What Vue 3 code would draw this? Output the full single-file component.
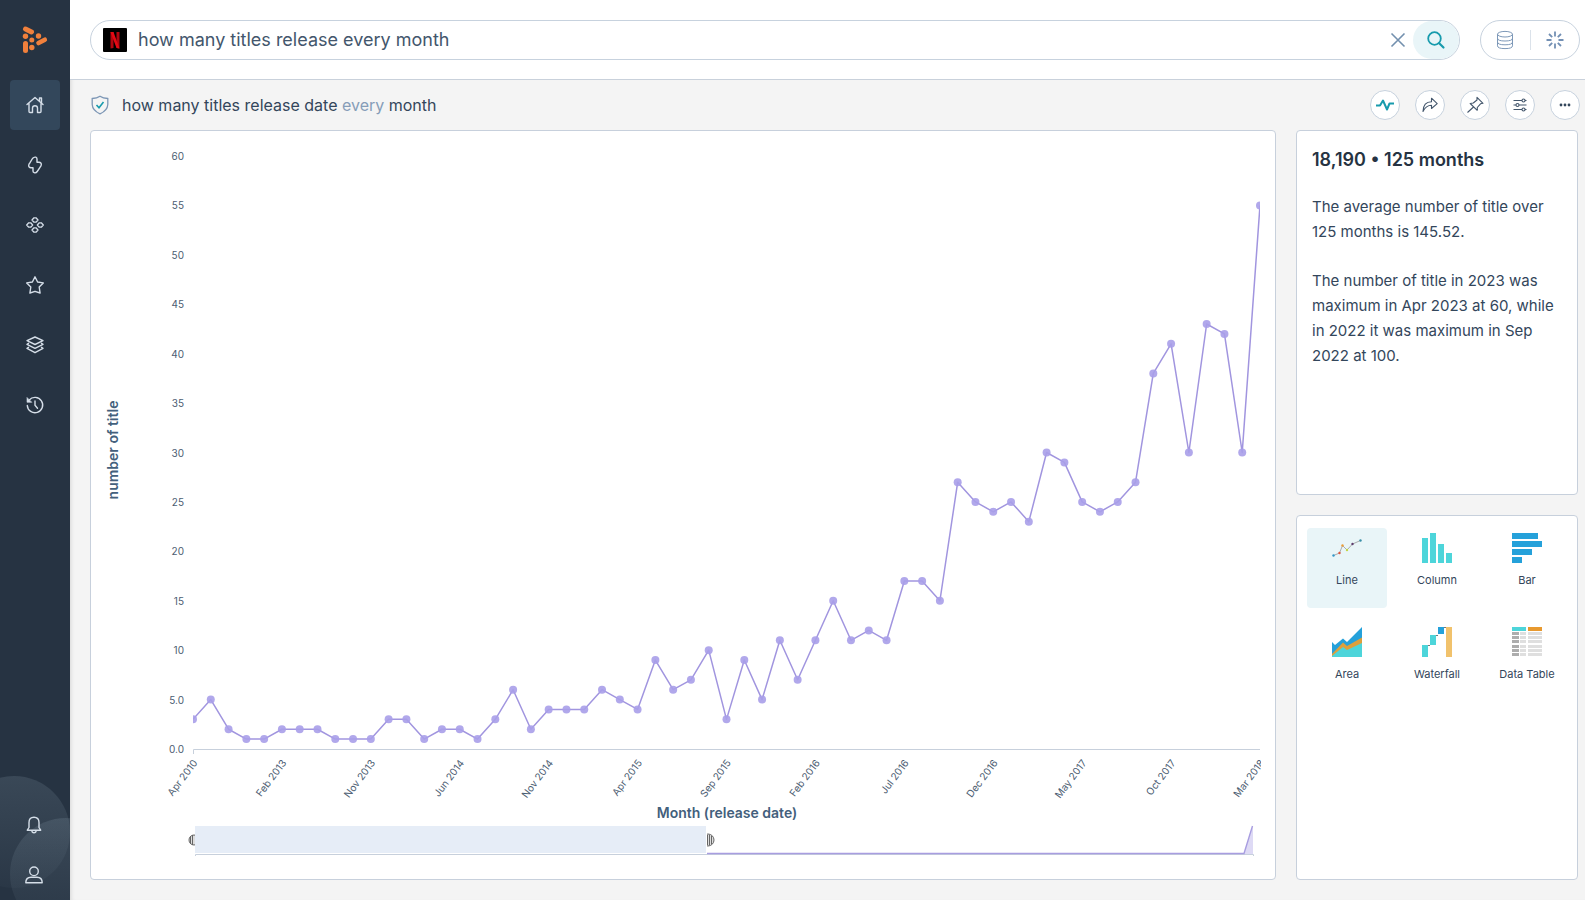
<script setup>
import { ref } from 'vue'

const query = ref('how many titles release every month')
const activeChart = ref('Line')

const values = [
  3, 5, 2, 1, 1, 2, 2, 2, 1, 1, 1, 3, 3, 1, 2, 2, 1, 3, 6, 2, 4, 4, 4, 6, 5, 4, 9, 6, 7, 10,
  3, 9, 5, 11, 7, 11, 15, 11, 12, 11, 17, 17, 15, 27, 25, 24, 25, 23, 30, 29, 25, 24, 25, 27,
  38, 41, 30, 43, 42, 30, 55
]
const months = [
  'Apr 2010', 'Feb 2013', 'Nov 2013', 'Jun 2014', 'Nov 2014', 'Apr 2015', 'Sep 2015',
  'Feb 2016', 'Jul 2016', 'Dec 2016', 'May 2017', 'Oct 2017', 'Mar 2018'
]

const plot = { left: 102, right: 1169, top: 25, bottom: 618 }
const xAt = (i) => plot.left + ((plot.right - plot.left) * i) / (values.length - 1)
const yAt = (v) => plot.bottom - ((plot.bottom - plot.top) * v) / 60

const points = values.map((v, i) => ({ x: xAt(i), y: yAt(v) }))
const linePath = points.map((p) => `${p.x},${p.y}`).join(' ')
const yTicks = Array.from({ length: 13 }, (_, i) => {
  const v = i * 5
  return { y: yAt(v), label: v < 10 ? v.toFixed(1) : String(v) }
})
const xTicks = months.map((label, i) => ({ x: xAt(i * 5), label }))

const chartTypes = ['Line', 'Column', 'Bar', 'Area', 'Waterfall', 'Data Table']
const tableRows = [5, 9, 13, 18, 22, 26]
</script>

<template>
  <div class="app">
    <aside class="sidebar">
      <svg class="glow" viewBox="0 0 70 124" aria-hidden="true">
        <defs>
          <linearGradient id="fade" x1="0" y1="0" x2="0" y2="1">
            <stop offset="0" stop-color="#a9bfce" stop-opacity=".15" />
            <stop offset="1" stop-color="#a9bfce" stop-opacity=".03" />
          </linearGradient>
        </defs>
        <circle cx="14" cy="56" r="56" fill="url(#fade)" />
        <circle cx="66" cy="98" r="56" fill="url(#fade)" />
      </svg>

      <a href="#" class="logo" aria-label="Home page">
        <svg width="26" height="28" viewBox="0 0 26 28" stroke="#f0803c" stroke-linecap="round" fill="#f0803c">
          <path d="M3.500 3L9.500 6" stroke-width="5" />
          <path d="M3.500 17.500V24.500" stroke-width="5" />
          <path d="M16.500 17L22.800 13.700" stroke-width="4.600" />
          <g stroke="none">
            <circle cx="3.500" cy="10.300" r="2.700" />
            <circle cx="9.800" cy="14" r="2.500" />
            <circle cx="16.500" cy="10" r="2.700" />
            <circle cx="9.800" cy="21.500" r="2.700" />
          </g>
        </svg>
      </a>

      <nav class="nav">
        <a href="#" class="nav-item active" aria-label="Home">
          <svg viewBox="0 0 20 20"><path d="M2 9.500L10 2.500L18 9.500M14.500 6V3H16.500V8M4 8.500V16.500Q4 17.500 5 17.500H7.500V13Q7.500 10.800 10 10.800T12.500 13V17.500H15Q16 17.500 16 16.500V8.500" /></svg>
        </a>
        <a href="#" class="nav-item" aria-label="Insights">
          <svg viewBox="0 0 20 20"><path d="M7.500 3.500Q9 1.700 10.800 2.200Q12 2.600 12 4V7.300H14Q16.500 7.500 16.300 9.800Q16.200 11 15 12.300L12.200 16.500Q11 18.300 9.200 17.700Q8 17.300 8 16V12.700H6Q3.500 12.500 3.700 10.200Q3.800 9 5 7.700Z" /></svg>
        </a>
        <a href="#" class="nav-item" aria-label="Pinboards">
          <svg viewBox="0 0 20 20">
            <g stroke-width="1.300">
              <path d="M9 2.800H11L13 5L11 7.200H9L7 5Z" />
              <path d="M3.700 7.800H5.700L7.700 10L5.700 12.200H3.700L1.700 10Z" />
              <path d="M14.300 7.800H16.300L18.300 10L16.300 12.200H14.300L12.300 10Z" />
              <path d="M9 12.800H11L13 15L11 17.200H9L7 15Z" />
            </g>
          </svg>
        </a>
        <a href="#" class="nav-item" aria-label="Favourites">
          <svg viewBox="0 0 20 20"><path d="M10 1.800L12.600 7L18.300 7.900L14.200 12L15.100 18L10 16.300L4.900 18L5.800 12L1.700 7.900L7.400 7Z" /></svg>
        </a>
        <a href="#" class="nav-item" aria-label="Data sets">
          <svg viewBox="0 0 20 20"><path d="M10 2L18 5.700L10 9.500L2 5.700ZM3.500 8.300L2 9.300L10 13.300L18 9.300L16.500 8.300M3.500 12.300L2 13.300L10 17.700L18 13.300L16.500 12.300" /></svg>
        </a>
        <a href="#" class="nav-item" aria-label="History">
          <svg viewBox="0 0 20 20"><path d="M4.200 5A7.700 7.700 0 1 1 2.300 10.500M10 6V10.300L12.500 13.200" /><path d="M2 2.800V7.300H6.500Z" fill="#d5dee8" stroke-width=".6" /></svg>
        </a>
      </nav>

      <nav class="nav-bottom">
        <a href="#" class="nav-item" aria-label="Notifications">
          <svg viewBox="0 0 20 20"><path d="M3.300 15.200L5 12.500V7.500Q5 2.200 10 2.200T15 7.500V12.500L16.700 15.200ZM7.800 15.500Q8 17.700 10 17.700T12.200 15.500" /></svg>
        </a>
        <a href="#" class="nav-item" aria-label="Account">
          <svg viewBox="0 0 20 20"><circle cx="10" cy="6.300" r="4.300" /><path d="M1.800 17.800Q1.800 12.300 7 12.300H13Q18.200 12.300 18.200 17.800Z" /></svg>
        </a>
      </nav>
    </aside>

    <div class="content">
      <header class="topbar">
        <form class="search" @submit.prevent>
          <svg class="brand" viewBox="0 0 24 24" aria-hidden="true">
            <rect width="24" height="24" rx="1" fill="#000" />
            <path d="M7.500 4H10.500V20L7.500 20.400Z" fill="#b1060f" />
            <path d="M13.500 4H16.500V20.400L13.500 20Z" fill="#b1060f" />
            <path d="M7.500 4H10.500L16.500 20.400L13.500 20Z" fill="#e50914" />
          </svg>
          <input v-model="query" type="text" aria-label="Search your data" />
          <button type="button" class="clear" aria-label="Clear search" @click="query = ''">
            <svg width="16" height="16" viewBox="0 0 16 16"><path d="M1.500 1.500L14.500 14.500M14.500 1.500L1.500 14.500" stroke="#7390ae" stroke-width="1.600" /></svg>
          </button>
          <button type="submit" class="go" aria-label="Search">
            <svg width="20" height="20" viewBox="0 0 20 20" fill="none" stroke="#189bad" stroke-width="1.800" stroke-linecap="round"><circle cx="8.500" cy="8.500" r="6.300" /><path d="M13.200 13.200L17.500 17.500" stroke-width="2.200" /></svg>
          </button>
        </form>
        <div class="tools">
          <button type="button" aria-label="Data sources">
            <svg width="20" height="20" viewBox="0 0 20 20" fill="none" stroke="#7d98b8" stroke-width="1"><ellipse cx="10" cy="4.200" rx="7.500" ry="2.800" /><path d="M2.500 4.200V15.800Q2.500 18.600 10 18.600T17.500 15.800V4.200M2.500 8.200Q2.500 11 10 11T17.500 8.200M2.500 12Q2.500 14.800 10 14.800T17.500 12" /></svg>
          </button>
          <span class="divider"></span>
          <button type="button" aria-label="Suggestions">
            <svg width="20" height="20" viewBox="0 0 20 20" stroke="#7390b4" stroke-width="1.800"><path d="M10 1.500V6.500M10 13.500V18.500M1.500 10H6.500M13.500 10H18.500M4 4L7.200 7.200M12.800 12.800L16 16M16 4L12.800 7.200M4 16L7.200 12.800" /></svg>
          </button>
        </div>
      </header>

      <div class="answer-bar">
        <svg class="shield" viewBox="0 0 18 20" fill="none" aria-hidden="true">
          <path d="M9 1.200Q12 3.300 16.800 3.500V9.500Q16.500 15.500 9 18.800Q1.500 15.500 1.200 9.500V3.500Q6 3.300 9 1.200Z" stroke="#7c96b5" stroke-width="1.300" />
          <path d="M5.500 10L8 12.800L12.500 7" stroke="#189bad" stroke-width="1.600" />
        </svg>
        <p class="parsed">how many titles release date <span>every</span> month</p>
        <div class="actions">
          <button type="button" aria-label="Insights">
            <svg viewBox="0 0 20 20"><path d="M1 10.500H5L8 5.500L12 14.500L14.500 8.500H19" stroke="#189bad" stroke-width="2" stroke-linejoin="round" /></svg>
          </button>
          <button type="button" aria-label="Share">
            <svg viewBox="0 0 20 20"><path d="M3 16.500Q3.300 6.800 11.500 6.800V3.200L17.200 8.700L11.500 13.500V10.300Q6 10.300 3 16.500Z" stroke-linejoin="round" /></svg>
          </button>
          <button type="button" aria-label="Pin">
            <svg viewBox="0 0 20 20"><path d="M12 2.300L18 8.300L15.500 8.800L12.300 12.500L12.200 15.300L5.200 8.500L8.300 8L12 5ZM8.500 12L2.500 17.500" stroke-linejoin="round" /></svg>
          </button>
          <button type="button" aria-label="Settings">
            <svg viewBox="0 0 20 20"><path d="M3.500 5.500H12M15 5.500H16.500M3.500 10H6M9 10H16.500M3.500 14.500H12M15 14.500H16.500" /><circle cx="13.500" cy="5.500" r="1.500" /><circle cx="7.500" cy="10" r="1.500" /><circle cx="13.500" cy="14.500" r="1.500" /></svg>
          </button>
          <button type="button" aria-label="More">
            <svg viewBox="0 0 20 20"><g fill="#33465b" stroke="none"><circle cx="6" cy="10" r="1.400" /><circle cx="10" cy="10" r="1.400" /><circle cx="14" cy="10" r="1.400" /></g></svg>
          </button>
        </div>
      </div>

      <main class="board">
        <section class="card chart-card">
          <svg class="chart" viewBox="0 0 1184 748" role="img" aria-label="Number of title by month of release date">
            <defs>
              <clipPath id="plot-clip"><rect x="102" y="0" width="1067" height="640" /></clipPath>
              <clipPath id="canvas-clip"><rect x="0" y="0" width="1170" height="748" /></clipPath>
              <clipPath id="handle-left"><rect x="96" y="700" width="8" height="20" /></clipPath>
              <clipPath id="handle-right"><rect x="616" y="700" width="8" height="20" /></clipPath>
            </defs>

            <g class="tick" text-anchor="end">
              <text v-for="t in yTicks" :key="t.label" x="93" :y="t.y + 4">{{ t.label }}</text>
            </g>
            <path d="M102.500 623V618.500H1169" class="axis" />
            <g class="tick" text-anchor="end" clip-path="url(#canvas-clip)">
              <text v-for="t in xTicks" :key="t.label" :transform="`translate(${t.x + 5} 632) rotate(-53)`">{{ t.label }}</text>
            </g>

            <g clip-path="url(#plot-clip)">
              <polyline :points="linePath" class="series" />
              <circle v-for="(p, i) in points" :key="i" :cx="p.x" :cy="p.y" r="4" class="dot" />
            </g>

            <text class="axis-title" text-anchor="middle" transform="translate(27 319) rotate(-90)">number of title</text>
            <text class="axis-title" text-anchor="middle" x="636" y="687">Month (release date)</text>

            <g>
              <rect x="104" y="695" width="511" height="27" fill="#e6edf7" />
              <path d="M104.500 725V723.500H1162.500V725" class="axis" />
              <path d="M1153 723L1162 695V723Z" fill="#dedaf5" />
              <path d="M616 722.500H1153L1161.500 695" fill="none" stroke="#a89de0" stroke-width="1.400" />
              <g clip-path="url(#handle-left)" stroke="#666">
                <circle cx="103" cy="709" r="5" fill="#ddd" />
                <path d="M99.500 705V713M101.500 704V714" />
              </g>
              <g clip-path="url(#handle-right)" stroke="#666">
                <circle cx="617" cy="709" r="6" fill="#ddd" />
                <path d="M616.500 704V714M618.500 704V714M620.500 705V713" />
              </g>
            </g>
          </svg>
        </section>

        <div class="side">
          <section class="card summary">
            <h2>18,190 • 125 months</h2>
            <p>The average number of title over 125 months is 145.52.</p>
            <p>The number of title in 2023 was maximum in Apr 2023 at 60, while in 2022 it was maximum in Sep 2022 at 100.</p>
          </section>

          <section class="card picker">
            <button
              v-for="name in chartTypes"
              :key="name"
              type="button"
              class="tile"
              :class="{ selected: name === activeChart }"
              :aria-pressed="name === activeChart"
              @click="activeChart = name"
            >
              <svg viewBox="0 0 30 30" width="30" height="30" aria-hidden="true">
                <g v-if="name === 'Line'">
                  <path d="M1.500 22.500L7.500 20L10.500 12.500L15 17L20.500 11L28.500 7.500" fill="none" stroke="#999" stroke-width=".8" />
                  <circle cx="1.500" cy="22.500" r="1.200" fill="#3498c8" /><circle cx="7.500" cy="20" r="1.200" fill="#e0533c" />
                  <circle cx="10.500" cy="12.500" r="1.200" fill="#eb9c35" /><circle cx="15" cy="17" r="1.200" fill="#c3d445" />
                  <circle cx="20.500" cy="11" r="1.200" fill="#5d3b6c" /><circle cx="28.500" cy="7.500" r="1.200" fill="#3a8fa8" />
                </g>
                <path v-else-if="name === 'Column'" d="M0 5H6V30H0ZM8 0H14V30H8ZM16 11H22V30H16ZM24 20H30V30H24Z" fill="#4dd5da" />
                <path v-else-if="name === 'Bar'" d="M0 0H26V6H0ZM0 8H30V14H0ZM0 16H20V22H0ZM0 24H10V30H0Z" fill="#25a1da" />
                <g v-else-if="name === 'Area'">
                  <path d="M0 15L3 18L11 11.500L15 15L30 0V30H0Z" fill="#25a1da" />
                  <path d="M0 27L11 15.500L15 19L30 10.500V30H0Z" fill="#dda03c" />
                  <path d="M0 29L11 20L15 23L30 16V30H0Z" fill="#4dd5da" />
                </g>
                <g v-else-if="name === 'Waterfall'">
                  <path d="M6 18.500H8M14 8.500H16M22 .500H24" stroke="#777" stroke-width="1" />
                  <path d="M0 18H6V30H0ZM8 8H14V18H8Z" fill="#4dd5da" />
                  <path d="M16 0H22V7H16Z" fill="#25a1da" />
                  <path d="M24 0H30V30H24Z" fill="#f1c26c" />
                </g>
                <g v-else>
                  <rect width="14" height="4" fill="#4dd5da" /><rect x="16" width="14" height="4" fill="#e8992f" />
                  <g v-for="y in tableRows" :key="y">
                    <rect :y="y" width="7" height="3" fill="#adadad" />
                    <rect x="8" :y="y" width="6" height="3" fill="#dfdfdf" />
                    <rect x="16" :y="y" width="14" height="3" fill="#dfdfdf" />
                  </g>
                </g>
              </svg>
              <span>{{ name }}</span>
            </button>
          </section>
        </div>
      </main>
    </div>
  </div>
</template>

<style>
body {
  margin: 0;
  background: #f4f4f4;
}
</style>

<style scoped>
.app {
  display: flex;
  min-height: 100vh;
  font-family: Inter, "Liberation Sans", sans-serif;
  color: #33465b;
  background: #f4f4f4;
}
button {
  font: inherit;
  color: inherit;
  border: 0;
  padding: 0;
  background: none;
  cursor: pointer;
}
a {
  color: inherit;
}

.sidebar {
  position: relative;
  flex: none;
  width: 70px;
  display: flex;
  flex-direction: column;
  align-items: center;
  overflow: hidden;
  background: #263342;
}
.glow {
  position: absolute;
  left: 0;
  bottom: 0;
  width: 70px;
  height: 124px;
}
.logo {
  display: flex;
  height: 80px;
  align-items: center;
}
.nav {
  display: flex;
  flex-direction: column;
  gap: 10px;
}
.nav-bottom {
  margin-top: auto;
  padding-right: 2px;
}
.nav-item {
  position: relative;
  display: flex;
  align-items: center;
  justify-content: center;
  width: 50px;
  height: 50px;
  border-radius: 4px;
}
.nav-item.active {
  background: #33475b;
}
.nav-item svg {
  width: 20px;
  height: 20px;
  fill: none;
  stroke: #d5dee8;
  stroke-width: 1.4;
  stroke-linejoin: round;
  stroke-linecap: round;
}

.content {
  flex: 1;
  min-width: 0;
  display: flex;
  flex-direction: column;
  box-shadow: inset 4px 0 4px -3px rgba(0, 0, 0, 0.12);
}
.topbar {
  display: flex;
  gap: 20px;
  padding: 20px 5px 19px 20px;
  background: #fff;
  border-bottom: 1px solid #c9d1db;
}
.search,
.tools {
  box-sizing: border-box;
  display: flex;
  align-items: center;
  height: 40px;
  border: 1px solid #c7d2de;
  border-radius: 20px;
  background: #fff;
  overflow: hidden;
}
.search {
  flex: 1;
  min-width: 0;
  padding-left: 12px;
}
.brand {
  flex: none;
  width: 24px;
  height: 24px;
}
.search input {
  flex: 1;
  min-width: 0;
  height: 36px;
  padding: 0 11px 2px;
  border: 0;
  outline: 0;
  background: none;
  font: 400 18px Inter, "Liberation Sans", sans-serif;
  color: #43566c;
}
.clear,
.go,
.tools button {
  display: flex;
  align-items: center;
  justify-content: center;
}
.clear {
  width: 30px;
  height: 38px;
}
.go {
  width: 46px;
  height: 38px;
  background: #e9f5f8;
  border-radius: 19px;
}
.tools {
  width: 100px;
}
.tools button {
  flex: 1;
  height: 38px;
}
.divider {
  width: 1px;
  height: 20px;
  background: #dbe2ea;
}

.answer-bar {
  display: flex;
  align-items: center;
  height: 50px;
  padding: 0 5px 0 20px;
}
.shield {
  width: 20px;
  height: 20px;
}
.parsed {
  flex: 1;
  margin: 0 0 0 12px;
  font-size: 16px;
}
.parsed span {
  color: #869db8;
}
.actions {
  display: flex;
  gap: 15px;
}
.actions button {
  box-sizing: border-box;
  display: flex;
  align-items: center;
  justify-content: center;
  width: 30px;
  height: 30px;
  border: 1px solid #c7d2de;
  border-radius: 50%;
  background: #fff;
}
.actions svg {
  flex: none;
  width: 20px;
  height: 20px;
  fill: none;
  stroke: #43566c;
  stroke-width: 1.1;
}

.board {
  flex: 1;
  display: grid;
  grid-template-columns: minmax(0, 1fr) 282px;
  gap: 20px;
  padding: 0 7px 20px 20px;
}
.card {
  box-sizing: border-box;
  border: 1px solid #c7d0dc;
  border-radius: 4px;
  background: #fff;
}
.chart-card {
  display: flex;
}
.chart {
  display: block;
  width: 100%;
}
.tick {
  font-size: 10px;
  fill: #4c5d72;
}
.axis {
  fill: none;
  stroke: #c7d0dc;
}
.axis-title {
  font-size: 14px;
  font-weight: 600;
  fill: #43607c;
}
.series {
  fill: none;
  stroke: #a195df;
  stroke-width: 1.5;
  stroke-linejoin: round;
}
.dot {
  fill: #a99fe9;
  fill-opacity: 0.9;
}

.side {
  display: grid;
  grid-template-rows: 1fr 1fr;
  gap: 20px;
}
.summary {
  padding: 19px 15px;
}
.summary h2 {
  margin: 0 0 24px;
  font-size: 18px;
  font-weight: 600;
  line-height: 20px;
  color: #263342;
}
.summary p {
  margin: 0 0 24px;
  font-size: 15px;
  line-height: 25px;
}
.picker {
  display: grid;
  grid-template-columns: repeat(3, 80px);
  grid-auto-rows: 80px;
  align-content: start;
  gap: 14px 10px;
  padding: 12px 10px;
}
.tile {
  display: flex;
  flex-direction: column;
  align-items: center;
  gap: 10px;
  padding-top: 5px;
  border-radius: 4px;
  font-size: 11px;
  line-height: 14px;
}
.tile.selected {
  background: #e9f5f8;
}
</style>
